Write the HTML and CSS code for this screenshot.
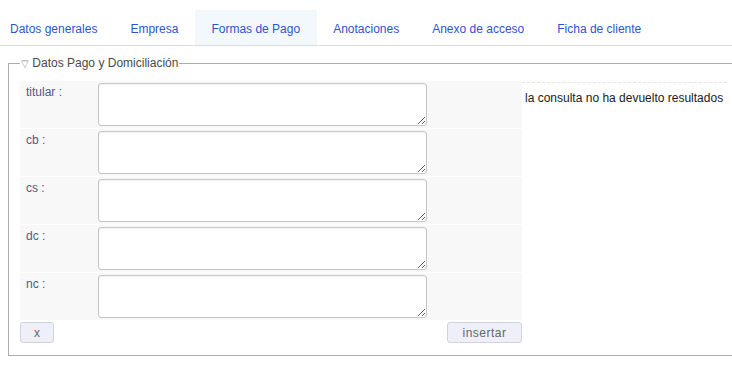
FILE: index.html
```html
<!DOCTYPE html>
<html lang="es">
<head>
    <meta charset="UTF-8">
    <title>Formas de Pago</title>
    <link rel="stylesheet" href="styles.css">
</head>
<body>
    <div class="tabs">
        <a class="tab first" href="#">Datos generales</a>
        <a class="tab" href="#">Empresa</a>
        <a class="tab active" href="#">Formas de Pago</a>
        <a class="tab" href="#">Anotaciones</a>
        <a class="tab" href="#">Anexo de acceso</a>
        <a class="tab" href="#">Ficha de cliente</a>
    </div>

    <fieldset class="panel">
        <legend class="panel_title"><span class="toggle">&#9661;</span> Datos Pago y Domiciliación</legend>
        <div class="panel_body">
            <div class="form">
                <table class="grid">
                    <tr>
                        <td class="label">titular :</td>
                        <td class="field"><textarea></textarea></td>
                        <td class="spare"></td>
                    </tr>
                    <tr>
                        <td class="label">cb :</td>
                        <td class="field"><textarea></textarea></td>
                        <td class="spare"></td>
                    </tr>
                    <tr>
                        <td class="label">cs :</td>
                        <td class="field"><textarea></textarea></td>
                        <td class="spare"></td>
                    </tr>
                    <tr>
                        <td class="label">dc :</td>
                        <td class="field"><textarea></textarea></td>
                        <td class="spare"></td>
                    </tr>
                    <tr>
                        <td class="label">nc :</td>
                        <td class="field"><textarea></textarea></td>
                        <td class="spare"></td>
                    </tr>
                </table>
                <div class="actions">
                    <button class="btn btn_clear">x</button>
                    <button class="btn btn_insert">insertar</button>
                </div>
            </div>
            <div class="result">la consulta no ha devuelto resultados</div>
        </div>
    </fieldset>
</body>
</html>
```

FILE: styles.css
```css
body {
  margin: 0;
  background: #fff;
  font-family: "Liberation Sans", Arial, sans-serif;
  font-size: 12px;
  color: #222;
}

/* tabs */
.tabs {
  display: flex;
  padding-top: 10px;
  border-bottom: 1px solid #dcdcdc;
}

.tab {
  display: block;
  height: 35px;
  line-height: 39px;
  padding: 0 17px 0 16px;
  color: #2b55d0;
  text-decoration: none;
}

.tab.first {
  padding-left: 10px;
}

.tab.active {
  background: #f3f8fd;
}

/* fieldset, open on the right like the original */
.panel {
  margin: 10px 0 0 8px;
  padding: 10px 0 12px 11px;
  border: 1px solid #acacac;
  border-right: none;
  min-width: 0;
}

.panel_title {
  padding: 0 1px;
  color: #4a4a4a;
  line-height: 15px;
}

.toggle {
  color: #999;
  font-size: 10px;
}

.panel_body {
  display: flex;
  align-items: flex-start;
}

.grid {
  border-collapse: separate;
  border-spacing: 0 1px;
  margin-top: -1px;
}

.grid td {
  padding: 0;
  background: #f8f8f8;
  vertical-align: top;
}

.grid .label {
  width: 72px;
  padding: 4px 0 0 6px;
  color: #565688;
}

.grid .field {
  padding: 2px 0;
}

.field textarea {
  display: block;
  box-sizing: border-box;
  width: 329px;
  height: 43px;
  margin: 0;
  border: 1px solid #c6c6c6;
  border-radius: 3px;
  box-shadow: inset 0 1px 2px rgba(0, 0, 0, 0.06);
  background: #fff;
}

.grid .spare {
  width: 95px;
}

.actions {
  display: flex;
  justify-content: space-between;
  margin-top: 1px;
}

.btn {
  height: 21px;
  padding: 0;
  border: 1px solid #d2d2d8;
  border-radius: 3px;
  background: #efeff9;
  color: #666;
  font-family: inherit;
  font-size: 12px;
}

.btn_clear {
  width: 34px;
}

.btn_insert {
  width: 75px;
  letter-spacing: 0.5px;
}

.result {
  margin: 1px 0 0 0;
  padding: 8px 0 0 3px;
  width: 202px;
  border-top: 1px dashed #e4e4e4;
  color: #1a1a1a;
}
```
